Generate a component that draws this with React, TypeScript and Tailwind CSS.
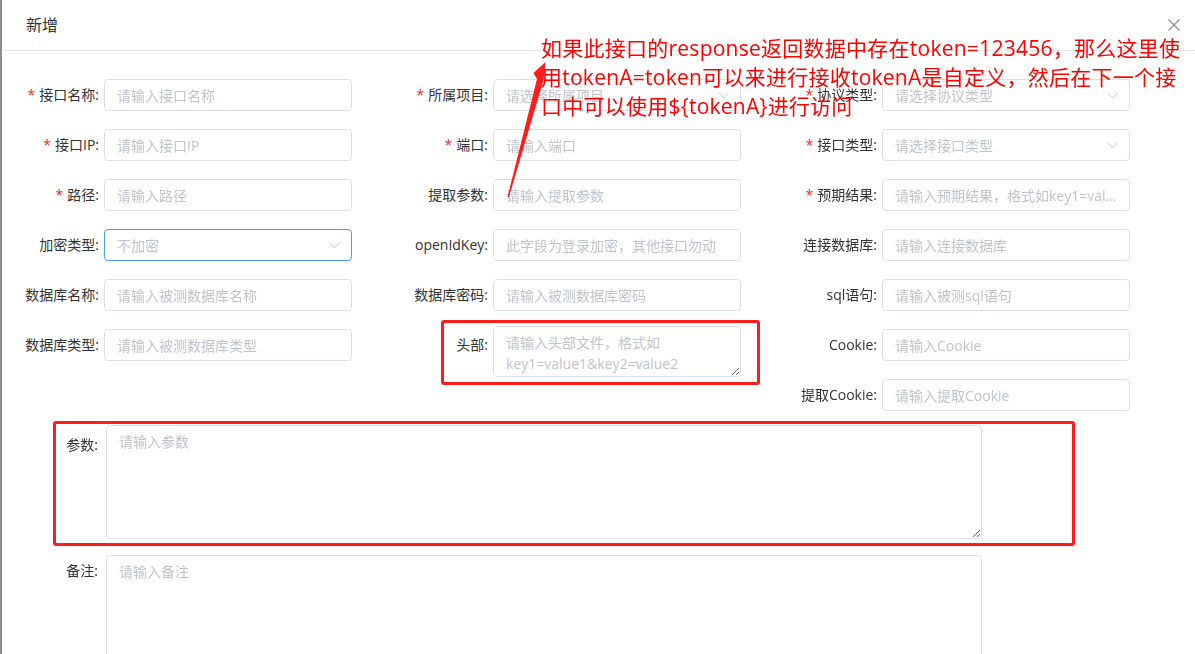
import React from "react";

type Field = {
  label: string;
  ph: string;
  req?: boolean;
  select?: boolean;
  focus?: boolean;
  area?: boolean;
};

const col1: Field[] = [
  { label: "接口名称", ph: "请输入接口名称", req: true },
  { label: "接口IP", ph: "请输入接口IP", req: true },
  { label: "路径", ph: "请输入路径", req: true },
  { label: "加密类型", ph: "不加密", select: true, focus: true },
  { label: "数据库名称", ph: "请输入被测数据库名称" },
  { label: "数据库类型", ph: "请输入被测数据库类型" },
];

const col2: Field[] = [
  { label: "所属项目", ph: "请选择所属项目", req: true, select: true },
  { label: "端口", ph: "请输入端口", req: true },
  { label: "提取参数", ph: "请输入提取参数" },
  { label: "openIdKey", ph: "此字段为登录加密，其他接口勿动" },
  { label: "数据库密码", ph: "请输入被测数据库密码" },
  { label: "头部", ph: "请输入头部文件，格式如key1=value1&key2=value2", area: true },
];

const col3: Field[] = [
  { label: "协议类型", ph: "请选择协议类型", req: true, select: true },
  { label: "接口类型", ph: "请选择接口类型", req: true, select: true },
  { label: "预期结果", ph: "请输入预期结果，格式如key1=value1&key2=value2", req: true },
  { label: "连接数据库", ph: "请输入连接数据库" },
  { label: "sql语句", ph: "请输入被测sql语句" },
  { label: "Cookie", ph: "请输入Cookie" },
  { label: "提取Cookie", ph: "请输入提取Cookie" },
];

const Chevron = () => (
  <svg className="absolute right-[12px] top-[13px]" width="11" height="7" viewBox="0 0 11 7">
    <polyline points="0.5,0.8 5.5,5.8 10.5,0.8" fill="none" stroke="#c0c4cc" strokeWidth="1" />
  </svg>
);

const FormItem: React.FC<{ f: Field }> = ({ f }) => (
  <div className="flex items-start">
    <label className="w-[90px] shrink-0 text-right pr-[5px] leading-[32px] text-[14px] text-[#333] whitespace-nowrap">
      {f.req && <span className="text-[#ee2a2a] mr-[4px]">*</span>}
      {f.label}:
    </label>
    {f.area ? (
      <textarea
        placeholder={f.ph}
        className="block w-[248px] h-[51px] -mt-[3px] border border-[#dcdfe6] rounded-[4px] px-[12px] py-[5px] leading-[21px] text-[14px] text-[#606266] bg-white outline-none placeholder:text-[#c0c4cc]"
      />
    ) : (
      <div className="relative">
        <input
          readOnly={f.select}
          placeholder={f.ph}
          className={
            "block w-[248px] h-[32px] border rounded-[4px] pl-[12px] text-[14px] text-[#606266] bg-white outline-none text-ellipsis placeholder:text-[#c0c4cc] " +
            (f.select ? "pr-[30px] " : "pr-[12px] ") +
            (f.focus ? "border-[#409eff]" : "border-[#dcdfe6]")
          }
        />
        {f.select && <Chevron />}
      </div>
    )}
  </div>
);

const Column: React.FC<{ items: Field[] }> = ({ items }) => (
  <div className="w-[389px] flex flex-col gap-[18px]">
    {items.map((f) => (
      <FormItem key={f.label} f={f} />
    ))}
  </div>
);

export default function App() {
  return (
    <div className="relative w-[1195px] h-[654px] overflow-hidden bg-white flex font-['Open_Sans','Noto_Sans_CJK_SC',sans-serif]">
      {/* page behind the dialog */}
      <div className="w-[2px] shrink-0 bg-[#8d8d8d]" />

      <div className="relative flex-1 flex flex-col">
        <div className="h-[51px] shrink-0 border-b border-[#e6e6e6] flex items-center pl-[24px] text-[16px] text-[#303133]">
          新增
        </div>
        <button className="absolute right-[15px] top-[19px]">
          <svg width="12" height="12" viewBox="0 0 12 12">
            <path d="M0.5 0.5 L11.5 11.5 M11.5 0.5 L0.5 11.5" stroke="#909399" strokeWidth="1.3" />
          </svg>
        </button>

        <div className="pt-[28px] pl-[12px] flex flex-col">
          <div className="flex">
            <Column items={col1} />
            <Column items={col2} />
            <Column items={col3} />
          </div>

          <div className="flex items-start mt-[18px]">
            <label className="w-[92px] shrink-0 text-right pr-[8px] leading-[32px] text-[14px] text-[#333]">参数:</label>
            <textarea
              placeholder="请输入参数"
              className="block w-[876px] h-[114px] -mt-[4px] border border-[#dcdfe6] rounded-[4px] px-[12px] py-[5px] leading-[21px] text-[14px] bg-white outline-none placeholder:text-[#c0c4cc]"
            />
          </div>

          <div className="flex items-start mt-[16px]">
            <label className="w-[92px] shrink-0 text-right pr-[8px] leading-[32px] text-[14px] text-[#333]">备注:</label>
            <textarea
              placeholder="请输入备注"
              className="block w-[876px] h-[140px] border border-[#dcdfe6] rounded-[4px] px-[12px] py-[5px] leading-[21px] text-[14px] bg-white outline-none placeholder:text-[#c0c4cc]"
            />
          </div>
        </div>
      </div>

      {/* annotations drawn over the screenshot */}
      <div className="absolute left-[441px] top-[320px] w-[319px] h-[65px] border-[3px] border-[#ff1c1c] rounded-[3px] pointer-events-none" />
      <div className="absolute left-[53px] top-[421px] w-[1022px] h-[125px] border-[3px] border-[#ff1c1c] rounded-[3px] pointer-events-none" />

      <svg className="absolute left-0 top-0 pointer-events-none" width="1195" height="654">
        <polygon points="545.5,62 543.5,80 509,197 507.5,197 537,79 533.5,73" fill="#ff1c1c" />
      </svg>

      <div className="absolute left-[541px] top-[34px] text-[21px] leading-[29px] tracking-[0.25px] text-[#ff0000] whitespace-nowrap pointer-events-none">
        <div>如果此接口的response返回数据中存在token=123456，那么这里使</div>
        <div>用tokenA=token可以来进行接收tokenA是自定义，然后在下一个接</div>
        <div>口中可以使用${"{"}tokenA{"}"}进行访问</div>
      </div>
    </div>
  );
}
